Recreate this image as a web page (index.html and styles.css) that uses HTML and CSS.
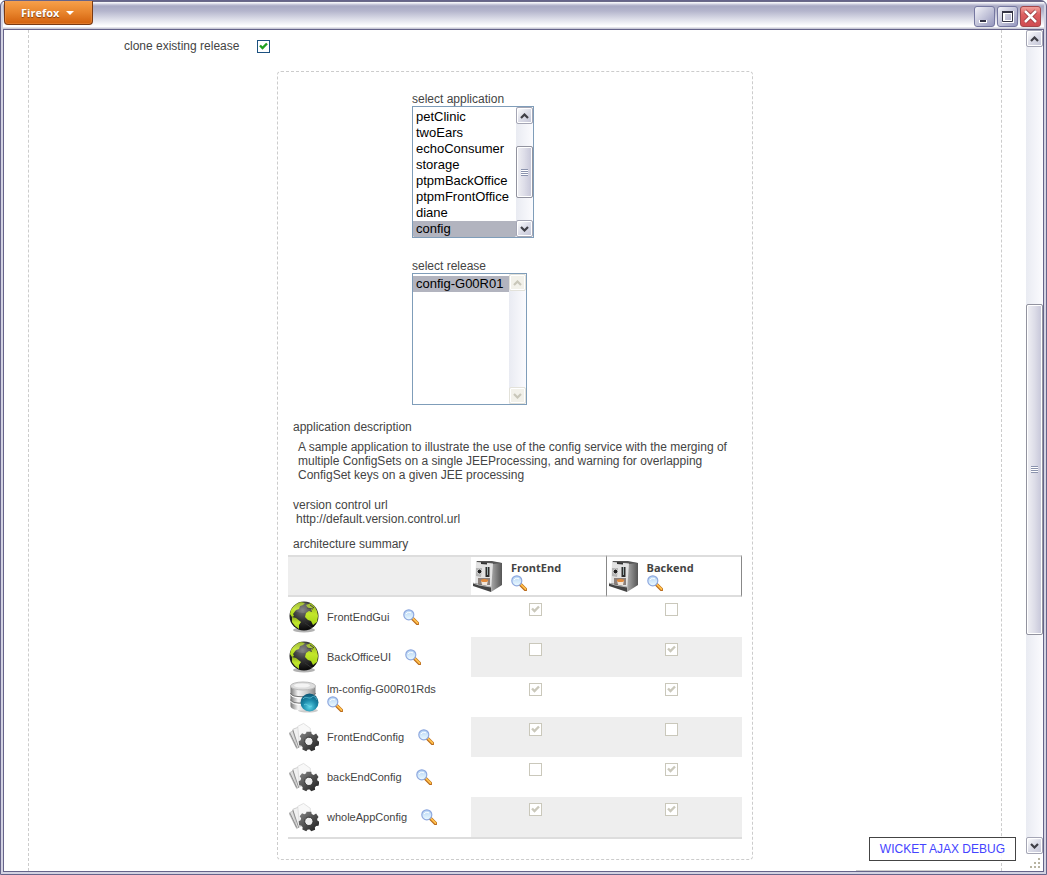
FILE: index.html
```html
<!DOCTYPE html>
<html lang="en">
<head>
<meta charset="utf-8">
<title>Release</title>
<link rel="stylesheet" href="styles.css">
</head>
<body>
<svg class="defs" aria-hidden="true">
  <defs>
    <radialGradient id="sphere" cx=".45" cy=".3" r=".7"><stop offset="0" stop-color="#777"/><stop offset=".5" stop-color="#333"/><stop offset="1" stop-color="#080808"/></radialGradient>
    <linearGradient id="land" x1="0" y1="0" x2="0" y2="1"><stop offset="0" stop-color="#8fae1c"/><stop offset=".5" stop-color="#c3e62c"/><stop offset="1" stop-color="#a5d417"/></linearGradient>
    <linearGradient id="metal" x1="0" y1="0" x2="1" y2="0"><stop offset="0" stop-color="#777"/><stop offset=".3" stop-color="#f4f4f4"/><stop offset=".65" stop-color="#ccc"/><stop offset="1" stop-color="#888"/></linearGradient>
    <radialGradient id="blue" cx=".5" cy=".75" r=".75"><stop offset="0" stop-color="#5cd3e6"/><stop offset=".5" stop-color="#1b8bab"/><stop offset="1" stop-color="#0c5473"/></radialGradient>
    <linearGradient id="dark" x1="0" y1="0" x2="1" y2="1"><stop offset="0" stop-color="#888"/><stop offset=".6" stop-color="#444"/><stop offset="1" stop-color="#1c1c1c"/></linearGradient>
    <linearGradient id="lens" x1="0" y1="0" x2="0" y2="1"><stop offset="0" stop-color="#b5d4f5"/><stop offset="1" stop-color="#ecfaff"/></linearGradient>
    <linearGradient id="side" x1="0" y1="0" x2="1" y2="0"><stop offset="0" stop-color="#aaa"/><stop offset="1" stop-color="#555"/></linearGradient>
    <symbol id="i-globe" viewBox="0 0 30 32">
      <ellipse cx="15" cy="29" rx="11" ry="2.5" fill="#000" opacity=".3"/>
      <circle cx="15" cy="15" r="14.5" fill="url(#sphere)"/>
      <path d="M2 9C4 5 8 2 12 1l4 1-2 2-3 1-1 3-3 1-3 4 1 2-2 1-2-3z" fill="url(#land)"/>
      <path d="M3 16l4 1 5 4-2 3v4l-4-3-3-4z" fill="url(#land)"/>
      <path d="M17 4l5-2 4 4 2 4 1 5-1 6-4 3-2-4-3-1-3-3 1-4 3-2 3 1-1-3-3-1-2-3z" fill="url(#land)"/>
      <path d="M18 7l6 1M21 4l4 3M16 22l7 5" stroke="#333" fill="none"/>
      <ellipse cx="14" cy="7" rx="10" ry="5" fill="#fff" opacity=".12"/>
    </symbol>
    <symbol id="i-database" viewBox="0 0 30 32">
      <ellipse cx="19" cy="29.500" rx="10" ry="2" fill="#000" opacity=".2"/>
      <path d="M1.500 5v20c0 6 25 6 25 0V5z" fill="url(#metal)"/>
      <path d="M1.500 12c1 5 24 5 25 0M1.500 18.500c1 5 24 5 25 0" fill="none" stroke="#777" stroke-width="1.200"/>
      <path d="M1.500 13.500c1 5 24 5 25 0M1.500 20c1 5 24 5 25 0" fill="none" stroke="#fff"/>
      <ellipse cx="14" cy="5" rx="12.500" ry="4" fill="#ddd" stroke="#bbb"/>
      <ellipse cx="13" cy="4.500" rx="8" ry="2" fill="#f4f4f4"/>
      <circle cx="20.500" cy="21.500" r="9" fill="url(#blue)"/>
      <path d="M14 18c3-4 6 1 9-2 2-2 4 1 5 3M15 24c3-3 4 3 8 1" fill="none" stroke="#7fdcec" opacity=".6"/>
    </symbol>
    <symbol id="i-config" viewBox="0 0 31 30">
      <path d="M0 11l7-4 5 17-4 3z" fill="#ddd" stroke="#aaa" stroke-width=".7"/>
      <path d="M4 7l8-3 2 20-6 2z" fill="#f1f1f1" stroke="#bbb" stroke-width=".7"/>
      <path d="M9 4l6-3 7 5v16l-11 3z" fill="#f8f8f8" stroke="#d4d4d4" stroke-width=".7"/>
      <path d="M1 11l7 15M4 8l6 18" stroke="#777" stroke-width=".8"/>
      <path fill="url(#dark)" fill-rule="evenodd" d="M18 9.500h5l.5 2.500 2 1 2.500-1.500 2.500 3.500-1.500 2 .5 2 2 1-1 4-2.500.3-1.300 1.500.3 2.400-4 1.600-1.600-1.800h-2l-1.600 1.800-4-2 .3-2.300-1.200-1.500-2.400-.5-.5-4 2-1.200.5-2-1.500-2 2.500-3.300 2.400 1.200 1.800-1z"/>
      <circle cx="20.500" cy="19.500" r="4.300" fill="#eee" stroke="#333"/>
    </symbol>
    <symbol id="i-machine" viewBox="0 0 30 32">
      <path d="M18 2l11 1v22l-11 7z" fill="url(#side)"/>
      <path d="M4 1h15l10 2-9 1L3 2.500z" fill="#555"/>
      <path d="M3 2l17 1.500-2 27L2 26z" fill="#e2e2e2"/>
      <path d="M8 2l6 .5v2L8 4z" fill="#333"/>
      <path d="M3 8h6l-1 9-5-1z" fill="#b5b5b5"/>
      <circle cx="6.500" cy="11.500" r="2.400" fill="#222" stroke="#eee" stroke-width=".8"/>
      <path d="M12.500 7h4v10h-4z" fill="#2c2c2c"/><path d="M14.500 7v8" stroke="#9aa"/>
      <path d="M5 18h12v7H5z" fill="#8c807a"/>
      <path d="M8 20h7l-1 5H9z" fill="#f2e6da"/><ellipse cx="11.500" cy="20.500" rx="3.600" ry="1.500" fill="#e28a3c"/>
      <path d="M0 23l6 1 12 3v5L0 26z" fill="#444"/><path d="M0 23l6 2 12 2" stroke="#bbb" fill="none"/>
    </symbol>
    <symbol id="i-lens" viewBox="0 0 16 16">
      <path d="M9.500 9.500l5 5" stroke="#b9691a" stroke-width="3.600" stroke-linecap="round"/>
      <path d="M9.800 9.300l4.700 4.700" stroke="#ffc04d" stroke-width="1.800" stroke-linecap="round"/>
      <circle cx="5.800" cy="5.800" r="5" fill="url(#lens)" stroke="#8fa9df" stroke-width="1.200"/>
      <path d="M3 5c1-2 4-2 5-1" stroke="#fff" fill="none"/>
    </symbol>
    <symbol id="i-up" viewBox="0 0 9 6"><path d="M1 5l3.500-3.500L8 5" fill="none" stroke="currentColor" stroke-width="2.200"/></symbol>
    <symbol id="i-down" viewBox="0 0 9 6"><path d="M1 1l3.500 3.500L8 1" fill="none" stroke="currentColor" stroke-width="2.200"/></symbol>
  </defs>
</svg>

<div class="window">
  <header class="titlebar">
    <button class="firefox" type="button">Firefox <span class="caret"></span></button>
    <div class="win-buttons">
      <button class="win-btn" type="button" aria-label="Minimize"><svg viewBox="0 0 19 19"><path d="M4 13h8v3H4z" fill="#fff"/><path d="M5 13h6v2H5z" fill="#334"/></svg></button>
      <button class="win-btn" type="button" aria-label="Maximize"><svg viewBox="0 0 19 19"><path d="M5.500 5.500h9v9h-9z" fill="none" stroke="#fff" stroke-width="3"/><path d="M4.500 4.500h10v10h-10z" fill="none" stroke="#334"/><path d="M4 5h11" stroke="#334" stroke-width="2"/></svg></button>
      <button class="win-btn close" type="button" aria-label="Close"><svg viewBox="0 0 19 19"><path d="M4 4l11 11M15 4L4 15" stroke="#8d3035" stroke-width="4"/><path d="M4 4l11 11M15 4L4 15" stroke="#fff" stroke-width="2.600"/></svg></button>
    </div>
  </header>
  <div class="body">
    <main class="page">
      <div class="panel">
        <div class="clone">
          <label for="clone">clone existing release</label>
          <input class="check" id="clone" type="checkbox" checked>
        </div>
        <section class="release">
          <div class="pickers">
            <div class="field">
              <label for="app">select application</label>
              <div class="listbox">
                <select id="app" size="8">
                  <option>petClinic</option><option>twoEars</option><option>echoConsumer</option><option>storage</option><option>ptpmBackOffice</option><option>ptpmFrontOffice</option><option>diane</option><option selected>config</option>
                </select>
                <div class="scroll">
                  <button class="arrow" type="button" aria-label="Scroll up"><svg><use href="#i-up"/></svg></button>
                  <div class="before"></div><div class="thumb"><i class="grip"></i></div><div class="after"></div>
                  <button class="arrow" type="button" aria-label="Scroll down"><svg><use href="#i-down"/></svg></button>
                </div>
              </div>
            </div>
            <div class="field">
              <label for="rel">select release</label>
              <div class="listbox">
                <select id="rel" size="8" class="narrow"><option selected>config-G00R01</option></select>
                <div class="scroll off">
                  <button class="arrow" type="button" disabled aria-label="Scroll up"><svg><use href="#i-up"/></svg></button>
                  <div class="before"></div>
                  <button class="arrow" type="button" disabled aria-label="Scroll down"><svg><use href="#i-down"/></svg></button>
                </div>
              </div>
            </div>
          </div>
          <div class="details">
            <h2>application description</h2>
            <p class="description">A sample application to illustrate the use of the config service with the merging of multiple ConfigSets on a single JEEProcessing, and warning for overlapping ConfigSet keys on a given JEE processing</p>
            <h2>version control url</h2>
            <p class="url">http://default.version.control.url</p>
            <h2>architecture summary</h2>
          </div>
          <table class="summary">
            <thead>
              <tr>
                <td></td>
                <th scope="col"><div class="item"><svg class="pic"><use href="#i-machine"/></svg><div class="name"><span>FrontEnd</span><svg class="lens"><use href="#i-lens"/></svg></div></div></th>
                <th scope="col"><div class="item"><svg class="pic"><use href="#i-machine"/></svg><div class="name"><span>Backend</span><svg class="lens"><use href="#i-lens"/></svg></div></div></th>
              </tr>
            </thead>
            <tbody>
              <tr>
                <th scope="row"><div class="item"><svg class="pic"><use href="#i-globe"/></svg><div class="name"><span>FrontEndGui</span><svg class="lens"><use href="#i-lens"/></svg></div></div></th>
                <td><input class="check" type="checkbox" disabled checked aria-label="FrontEndGui on FrontEnd"></td>
                <td><input class="check" type="checkbox" disabled aria-label="FrontEndGui on Backend"></td>
              </tr>
              <tr>
                <th scope="row"><div class="item"><svg class="pic"><use href="#i-globe"/></svg><div class="name"><span>BackOfficeUI</span><svg class="lens"><use href="#i-lens"/></svg></div></div></th>
                <td><input class="check" type="checkbox" disabled aria-label="BackOfficeUI on FrontEnd"></td>
                <td><input class="check" type="checkbox" disabled checked aria-label="BackOfficeUI on Backend"></td>
              </tr>
              <tr>
                <th scope="row"><div class="item"><svg class="pic"><use href="#i-database"/></svg><div class="name"><span>lm-config-G00R01Rds</span><svg class="lens"><use href="#i-lens"/></svg></div></div></th>
                <td><input class="check" type="checkbox" disabled checked aria-label="lm-config-G00R01Rds on FrontEnd"></td>
                <td><input class="check" type="checkbox" disabled checked aria-label="lm-config-G00R01Rds on Backend"></td>
              </tr>
              <tr>
                <th scope="row"><div class="item"><svg class="pic"><use href="#i-config"/></svg><div class="name"><span>FrontEndConfig</span><svg class="lens"><use href="#i-lens"/></svg></div></div></th>
                <td><input class="check" type="checkbox" disabled checked aria-label="FrontEndConfig on FrontEnd"></td>
                <td><input class="check" type="checkbox" disabled aria-label="FrontEndConfig on Backend"></td>
              </tr>
              <tr>
                <th scope="row"><div class="item"><svg class="pic"><use href="#i-config"/></svg><div class="name"><span>backEndConfig</span><svg class="lens"><use href="#i-lens"/></svg></div></div></th>
                <td><input class="check" type="checkbox" disabled aria-label="backEndConfig on FrontEnd"></td>
                <td><input class="check" type="checkbox" disabled checked aria-label="backEndConfig on Backend"></td>
              </tr>
              <tr>
                <th scope="row"><div class="item"><svg class="pic"><use href="#i-config"/></svg><div class="name"><span>wholeAppConfig</span><svg class="lens"><use href="#i-lens"/></svg></div></div></th>
                <td><input class="check" type="checkbox" disabled checked aria-label="wholeAppConfig on FrontEnd"></td>
                <td><input class="check" type="checkbox" disabled checked aria-label="wholeAppConfig on Backend"></td>
              </tr>
            </tbody>
          </table>
        </section>
      </div>
      <a class="debug" href="#">WICKET AJAX DEBUG</a>
    </main>
    <div class="rail">
      <div class="scroll main-scroll">
        <button class="arrow" type="button" aria-label="Scroll page up"><svg><use href="#i-up"/></svg></button>
        <div class="before"></div><div class="thumb"><i class="grip"></i></div><div class="after"></div>
        <button class="arrow" type="button" aria-label="Scroll page down"><svg><use href="#i-down"/></svg></button>
      </div>
      <svg class="corner" viewBox="0 0 17 17"><path d="M12 4h2v2h-2zM8 8h2v2H8zM12 8h2v2h-2zM4 12h2v2H4zM8 12h2v2H8zM12 12h2v2h-2z" fill="#b8b4a2"/></svg>
    </div>
  </div>
</div>
</body>
</html>
```

FILE: styles.css
```css
* { box-sizing: border-box; }
body {
  margin: 0;
  background: #fff;
  color: #444;
  font: 12px/14px "Liberation Sans", Arial, sans-serif;
}
button { padding: 0; font: inherit; }
.defs { position: absolute; width: 0; height: 0; }

/* window frame */
.window {
  display: flex;
  flex-direction: column;
  min-height: 100vh;
  padding: 0 2px 2px;
  border: 1px solid #66648a;
  border-radius: 6px 6px 0 0;
  background: #d3d3e2;
}
.titlebar {
  display: flex;
  justify-content: space-between;
  height: 28px;
  background: linear-gradient(#6b6988 0 1px, #f4f4f8 1px 2px, #d0d0e0 3px, #a9a9c4 5px, #b4b5cc 10px, #dcdde8 18px, #fff 25px, #fff 26px, #c9c9d6 27px);
}
.firefox {
  display: flex;
  align-items: center;
  gap: 7px;
  height: 24px;
  margin-left: 1px;
  padding: 0 18px 0 16px;
  border: 1px solid #7a3a12;
  border-top: 0;
  border-radius: 0 0 4px 4px;
  background: linear-gradient(#f7a04a, #e8842c 50%, #d2600c);
  box-shadow: inset 0 0 0 1px #f0a05c66;
  color: #fff;
  font: bold 11px/14px "Open Sans", "Noto Sans", sans-serif;
  text-shadow: 0 1px 1px #7a3a12;
}
.caret { border: 4px solid transparent; border-top-color: #fff; border-bottom: 0; }
.win-buttons { display: flex; gap: 2px; padding: 5px 3px 0 0; }
.win-btn {
  width: 21px;
  height: 21px;
  border: 1px solid #7577a0;
  border-radius: 3px;
  background: linear-gradient(135deg, #f2f2f8, #c4c5da 50%, #9496bd);
}
.win-btn svg { display: block; width: 19px; height: 19px; }
.close { border-color: #a3474b; background: linear-gradient(#f0a09a, #dd5f60 40%, #cf4c52); }
.body {
  flex: 1;
  display: flex;
  border: 1px solid #66648a;
  background: #fff;
}

/* page */
.page { position: relative; flex: 1; padding: 0 24px; }
.page::after {
  content: "";
  position: absolute;
  right: 36px;
  bottom: 0;
  width: 134px;
  height: 1px;
  background: #ccc;
}
.panel {
  height: 100%;
  padding: 9px 0 11px;
  border: 1px dashed #ccc;
  border-width: 0 1px;
}
.clone { display: flex; align-items: center; gap: 18px; padding-left: 95px; }
.check {
  appearance: none;
  width: 13px;
  height: 13px;
  margin: 0;
  border: 1px solid #1c5180;
  background: #fff;
}
.check:checked {
  background: url("data:image/svg+xml,%3Csvg xmlns='http://www.w3.org/2000/svg' viewBox='0 0 11 11'%3E%3Cpath d='M2 4.500l2.500 2.500L9 2.500' fill='none' stroke='%2321a121' stroke-width='2.400'/%3E%3C/svg%3E") center / 11px 11px;
}
.check:disabled { border-color: #cac8bb; }
.check:disabled:checked {
  background-image: url("data:image/svg+xml,%3Csvg xmlns='http://www.w3.org/2000/svg' viewBox='0 0 11 11'%3E%3Cpath d='M2 4.500l2.500 2.500L9 2.500' fill='none' stroke='%23cac8bb' stroke-width='2.400'/%3E%3C/svg%3E");
  background-color: #fff;
}
.release {
  max-width: 476px;
  margin: 18px auto 0;
  padding: 20px 10px;
  border: 1px dashed #ccc;
  border-radius: 4px;
}
.pickers { display: grid; gap: 21px; padding-left: 124px; }
.field { display: flex; flex-direction: column; align-items: flex-start; }
.listbox { display: flex; height: 132px; border: 1px solid #7f9db9; }
.listbox select {
  width: 103px;
  padding: 2px 0 0;
  border: 0;
  outline: 0;
  background: #fff;
  color: #000;
  font: 13px/16px "Liberation Sans", Arial, sans-serif;
  overflow: hidden;
}
.listbox .narrow { width: 96px; }
.listbox option { height: 16px; min-height: 16px; padding: 0 3px; color: #000; }
.listbox option:checked { background: #b2b4bf linear-gradient(#b2b4bf, #b2b4bf); color: #000; }

/* scroll bars */
.scroll {
  display: flex;
  flex-direction: column;
  width: 17px;
  background: linear-gradient(90deg, #e9ebf2, #fbfbfe);
}
.arrow {
  display: grid;
  place-items: center;
  width: 100%;
  height: 17px;
  border: 1px solid #a5a6b5;
  border-radius: 2px;
  background: linear-gradient(135deg, #fff, #dcdde8 50%, #c3c4d6);
  box-shadow: inset 0 0 0 1px #fff;
  color: #3f3f46;
}
.arrow svg { width: 9px; height: 6px; }
.off .arrow { border-color: #e3e2da; background: #f2f1ea; color: #c9c7ba; }
.before { flex: 22; }
.after { flex: 22; }
.thumb {
  flex: 52;
  display: grid;
  place-items: center;
  border: 1px solid #92939f;
  border-radius: 2px;
  background: linear-gradient(90deg, #f0f0f4, #dddde8 50%, #c5c5d8);
  box-shadow: inset 0 0 0 1px #fff;
}
.grip { width: 7px; height: 7px; background: repeating-linear-gradient(#8b93ad 0 1px, #fff 1px 2px); }
.rail { display: flex; flex-direction: column; width: 17px; }
.main-scroll { flex: 1; width: auto; }
.main-scroll .before { flex: 258; }
.main-scroll .thumb { flex: 329; }
.main-scroll .after { flex: 203; }
.corner { width: 17px; height: 17px; }

/* text blocks */
.details { padding: 15px 0 4px 5px; }
.details h2 { margin: 0; font: inherit; }
.description { margin: 6px 0 16px; padding: 0 5px; }
.url { margin: 0 0 11px; padding-left: 3px; }

/* architecture table */
.summary {
  width: 100%;
  table-layout: fixed;
  border-collapse: separate;
  border-spacing: 0;
  border-bottom: 2px solid #ddd;
  font-size: 11px;
}
.summary th, .summary td { height: 40px; padding: 0; text-align: left; }
.summary thead td, .summary thead th { height: 42px; border: 2px solid #ddd; border-width: 2px 0; }
.summary thead td { width: 183px; background: #eee; }
.summary thead th { border-right: 1px solid #888; font: bold 11px/14px "Open Sans", "Noto Sans", sans-serif; }
.summary tbody th { font-weight: normal; }
.summary tbody td { padding: 6px 6px 0 0; text-align: center; vertical-align: top; line-height: 0; }
.summary tbody tr:nth-child(even) td { background: #eee; }
.item { display: flex; align-items: center; gap: 8px; padding-left: 1px; }
.pic { flex: none; width: 30px; height: 34px; }
.name { display: flex; flex-wrap: wrap; align-items: center; column-gap: 14px; max-width: 130px; }
thead .item { padding-left: 2px; }
thead .name { max-width: 60px; }
.lens { width: 16px; height: 16px; }

.debug {
  position: absolute;
  right: 10px;
  bottom: 10px;
  padding: 4px 10px;
  border: 1px solid #444;
  background: #ffffffcc;
  color: #44f;
  font-size: 12px;
  text-decoration: none;
}
```
